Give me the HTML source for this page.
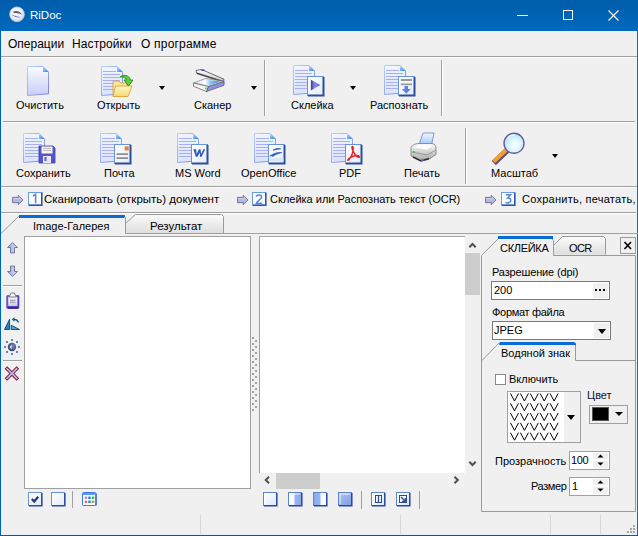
<!DOCTYPE html>
<html><head><meta charset="utf-8">
<style>
*{margin:0;padding:0;box-sizing:border-box}
html,body{width:638px;height:536px;overflow:hidden;background:#f0f0f0}
body{position:relative;font-family:"Liberation Sans",sans-serif;font-size:11px;color:#000}
.a{position:absolute}
.t{position:absolute;white-space:nowrap;line-height:13px}
.hl{position:absolute;height:1px;background:#a0a0a0}
.hw{position:absolute;height:1px;background:#fff}
.vl{position:absolute;width:1px;background:#a0a0a0}
.vw{position:absolute;width:1px;background:#fff}
.tri{position:absolute;width:0;height:0;border-left:3.5px solid transparent;border-right:3.5px solid transparent;border-top:4px solid #000}
svg{position:absolute;overflow:visible}
</style></head><body>
<svg width="0" height="0" style="position:absolute">
<defs>
<linearGradient id="gDoc" x1="0" y1="0" x2="0" y2="1"><stop offset="0" stop-color="#fbfcff"/><stop offset="1" stop-color="#c9cdf6"/></linearGradient>
<linearGradient id="gDocL" x1="0" y1="0" x2="0" y2="1"><stop offset="0" stop-color="#eef6ff"/><stop offset="1" stop-color="#d7e4fb"/></linearGradient>
<linearGradient id="gFold" x1="0" y1="0" x2="1" y2="1"><stop offset="0" stop-color="#b8dcff"/><stop offset="1" stop-color="#2a7fe0"/></linearGradient>
<linearGradient id="gDocB" x1="0" y1="0" x2="1" y2="1"><stop offset="0" stop-color="#b4d4fb"/><stop offset="1" stop-color="#7f7fd8"/></linearGradient>
<linearGradient id="gBadge" x1="0" y1="0" x2="1" y2="1"><stop offset="0" stop-color="#ffffff"/><stop offset="1" stop-color="#e4eaf6"/></linearGradient>
<symbol id="doc" viewBox="0 0 22 30">
<path d="M0.5 0.5H16L21.5 6V27.8L0.5 29.5Z" fill="url(#gDoc)" stroke="url(#gDocB)"/>
<path d="M16 0.5V6H21.5Z" fill="url(#gFold)"/>
</symbol>
<symbol id="docl" viewBox="0 0 22 30">
<path d="M0.5 0.5H16L21.5 6V27.8L0.5 29.5Z" fill="url(#gDocL)" stroke="url(#gDocB)"/>
<path d="M16 0.5V6H21.5Z" fill="url(#gFold)"/>
<g stroke="#b0acf4" stroke-width="1">
<path d="M2 5.5H15M2 8.5H19M2 11.5H19M2 14.5H19M2 17.5H19M2 20.5H19M2 23.5H19"/>
</g>
</symbol>
</defs>
</svg>

<!-- ===== TITLE BAR ===== -->
<div class="a" style="left:0;top:0;width:638px;height:31px;background:linear-gradient(#005dab,#0069be)"></div>
<svg style="left:9px;top:6px" width="17" height="17" viewBox="0 0 17 17">
<defs><radialGradient id="gTi" cx="0.45" cy="0.4" r="0.6"><stop offset="0" stop-color="#ffffff"/><stop offset="0.7" stop-color="#e4ecf8"/><stop offset="1" stop-color="#c8d0e0"/></radialGradient>
<linearGradient id="gSw" x1="0" y1="0" x2="1" y2="0"><stop offset="0" stop-color="#6a6a78"/><stop offset="0.6" stop-color="#5a8ae0"/><stop offset="1" stop-color="#4a5a88"/></linearGradient></defs>
<circle cx="8" cy="8.3" r="7.4" fill="url(#gTi)" stroke="#d8ccc0" stroke-width="0.7"/>
<path d="M4.2 5.6C7.5 4.2 11.5 5.5 13.2 8.8C11 7.4 8 6.6 4.6 7Z" fill="#5a5f70"/>
<path d="M2.8 8.6C4.5 11 8.5 12.2 12 11C9 10.8 6 10.2 2.8 8.6Z" fill="url(#gSw)"/>
</svg>
<div class="t" style="left:30px;top:9px;font-size:11.5px;color:#fff">RiDoc</div>
<div class="a" style="left:517px;top:15px;width:11px;height:1px;background:#fff"></div>
<div class="a" style="left:563px;top:10px;width:10px;height:10px;border:1px solid #fff"></div>
<svg style="left:608px;top:10px" width="11" height="11" viewBox="0 0 11 11"><path d="M0.5 0.5L10.5 10.5M10.5 0.5L0.5 10.5" stroke="#fff" stroke-width="1.1"/></svg>

<!-- window border -->
<div class="a" style="left:0;top:31px;width:1px;height:505px;background:#0063b1"></div>
<div class="a" style="left:637px;top:31px;width:1px;height:505px;background:#0070cc"></div>
<div class="a" style="left:0;top:535px;width:638px;height:1px;background:#005aa8"></div>

<!-- ===== MENU ===== -->
<div class="t" style="left:8px;top:37px;font-size:12px;line-height:14px">Операции</div>
<div class="t" style="left:72px;top:37px;font-size:12px;line-height:14px;letter-spacing:0.1px">Настройки</div>
<div class="t" style="left:141px;top:37px;font-size:12px;line-height:14px;letter-spacing:0.2px">О программе</div>
<div class="hl" style="left:1px;top:56px;width:636px"></div>
<div class="hw" style="left:1px;top:57px;width:636px"></div>

<!-- ===== TOOLBAR 1 ===== -->
<svg style="left:27px;top:66px" width="22" height="30"><use href="#doc"/></svg>
<div class="t" style="left:16px;top:99px">Очистить</div>

<svg style="left:101px;top:66px" width="22" height="30"><use href="#docl"/></svg>
<svg style="left:112px;top:74px" width="22" height="24" viewBox="0 0 22 24">
<defs><linearGradient id="gFol" x1="0" y1="0" x2="0" y2="1"><stop offset="0" stop-color="#fff8c4"/><stop offset="1" stop-color="#f6d878"/></linearGradient></defs>
<path d="M1 7H7L9 9H15V22H1Z" fill="#fbe49a" stroke="#d4a030" stroke-width="0.8"/>
<path d="M3.5 12H20L16 22.5H1Z" fill="url(#gFol)" stroke="#d4a030" stroke-width="0.8"/>
<path d="M8 3C12 0 17 1 18.5 6L21 6L16.5 12L12 6L14.5 6C13.5 3.5 10.5 2.5 8 3Z" fill="#5ad040" stroke="#1e7a14" stroke-width="0.8"/>
</svg>
<div class="t" style="left:97px;top:99px">Открыть</div>
<div class="tri" style="left:159px;top:86px"></div>

<svg style="left:188px;top:64px" width="40" height="32" viewBox="0 0 40 32">
<defs><linearGradient id="gGlass" x1="0" y1="0" x2="1" y2="0"><stop offset="0" stop-color="#d8eeff"/><stop offset="0.35" stop-color="#ffffff"/><stop offset="0.55" stop-color="#8cc8f8"/><stop offset="1" stop-color="#1a86e6"/></linearGradient>
<linearGradient id="gLid" x1="0" y1="0" x2="0" y2="1"><stop offset="0" stop-color="#ffffff"/><stop offset="1" stop-color="#c8c8c8"/></linearGradient></defs>
<path d="M8 6.5L13.5 5.5L36 15.2L35 17.2L8.5 8.8Z" fill="url(#gLid)" stroke="#4a4a4a" stroke-width="0.8"/>
<ellipse cx="15" cy="6.2" rx="2" ry="0.8" fill="#3a3ac0"/>
<path d="M8.8 9.3L34.8 17.8" stroke="#3a3a3a" stroke-width="1.4" opacity="0.85"/>
<path d="M34.5 15L36.5 15.8L36.3 20.5L34.5 18Z" fill="#7a7ae0"/>
<path d="M5.5 19L17.5 14.5L36 17.5L20.5 22.5Z" fill="#e8e8e8" stroke="#777" stroke-width="0.6"/>
<path d="M9.5 18.7L17.5 15.8L32.5 17.6L20.5 21.4Z" fill="url(#gGlass)"/>
<path d="M5.5 19V22.3L18.5 27.6L20.5 22.5Z" fill="#f4f4f4" stroke="#555" stroke-width="0.7"/>
<path d="M20.5 22.5L36 17.5V21.3L18.5 27.6Z" fill="#9090e8" stroke="#555" stroke-width="0.7"/>
<rect x="17" y="23.6" width="1.6" height="1.6" fill="#40d040"/>
</svg>
<div class="t" style="left:194px;top:99px">Сканер</div>
<div class="tri" style="left:251px;top:86px"></div>
<div class="vl" style="left:264px;top:60px;height:56px"></div>
<div class="vw" style="left:265px;top:60px;height:56px"></div>

<svg style="left:293px;top:65px" width="22" height="30"><use href="#docl"/></svg>
<svg style="left:307px;top:76px" width="18" height="21" viewBox="0 0 18 21"><rect x="0.5" y="0.5" width="16" height="19" fill="url(#gBadge)" stroke="#6a94d8"/><path d="M16.5 1V19.5H1" stroke="#2a4ea0" stroke-width="2" fill="none"/><defs><linearGradient id="gPlay" x1="0" y1="0" x2="1" y2="0"><stop offset="0" stop-color="#3a3aa0"/><stop offset="0.4" stop-color="#8a8ae0"/><stop offset="1" stop-color="#6a6ad0"/></linearGradient></defs><path d="M3.9 3.8L13.4 9L3.9 14.4Z" fill="url(#gPlay)"/></svg>
<div class="t" style="left:291px;top:99px">Склейка</div>
<div class="tri" style="left:350px;top:86px"></div>

<svg style="left:384px;top:65px" width="22" height="30"><use href="#docl"/></svg>
<svg style="left:398px;top:76px" width="18" height="21" viewBox="0 0 18 21"><rect x="0.5" y="0.5" width="16" height="19" fill="url(#gBadge)" stroke="#6a94d8"/><path d="M16.5 1V19.5H1" stroke="#2a4ea0" stroke-width="2" fill="none"/><path d="M2.8 4H14M2.8 8.3H14" stroke="#9a9a9a" stroke-width="1.8"/><path d="M6.5 10H10V13H12.8L8.3 17.8L3.8 13H6.5Z" fill="#5a86e0"/></svg>
<div class="t" style="left:370px;top:99px">Распознать</div>
<div class="vl" style="left:441px;top:60px;height:56px"></div>
<div class="vw" style="left:442px;top:60px;height:56px"></div>

<div class="hl" style="left:3px;top:121px;width:632px"></div>
<div class="hw" style="left:3px;top:122px;width:632px"></div>

<!-- ===== TOOLBAR 2 ===== -->
<svg style="left:23px;top:133px" width="22" height="30"><use href="#docl"/></svg>
<svg style="left:38px;top:145px" width="18" height="19" viewBox="0 0 18 19">
<path d="M1 1H15L17 3V18H1Z" fill="#5656c8" stroke="#3a3aa0" stroke-width="0.8"/>
<rect x="3.5" y="1.5" width="11" height="7" fill="#f4f4f4"/>
<path d="M5 3.5H13M5 5.5H13" stroke="#aaa" stroke-width="0.8"/>
<rect x="5" y="11" width="8" height="7" fill="#e8e8f4"/>
<rect x="6.5" y="12" width="2" height="4" fill="#5656c8"/>
</svg>
<div class="t" style="left:16px;top:167px">Сохранить</div>

<svg style="left:100px;top:133px" width="22" height="30"><use href="#docl"/></svg>
<svg style="left:114px;top:144px" width="18" height="21" viewBox="0 0 18 21"><rect x="0.5" y="0.5" width="16" height="19" fill="url(#gBadge)" stroke="#6a94d8"/><path d="M16.5 1V19.5H1" stroke="#2a4ea0" stroke-width="2" fill="none"/><rect x="10.7" y="2.3" width="4" height="4.2" fill="#e8843a"/><path d="M2.5 10.1H14M2.5 14.2H14" stroke="#8f8f8f" stroke-width="1.8"/></svg>
<div class="t" style="left:104px;top:167px">Почта</div>

<svg style="left:177px;top:133px" width="22" height="30"><use href="#docl"/></svg>
<svg style="left:191px;top:144px" width="18" height="21" viewBox="0 0 18 21"><rect x="0.5" y="0.5" width="16" height="19" fill="url(#gBadge)" stroke="#6a94d8"/><path d="M16.5 1V19.5H1" stroke="#2a4ea0" stroke-width="2" fill="none"/><path d="M2.4 5.2H5.2L5.5 10.2L8 5.2H9.6L10 10.2L12.4 5.2H14.2L10.6 12.8H9L8.7 8.6L6.4 12.8H4.8Z" fill="#2a56b8"/></svg>
<div class="t" style="left:175px;top:167px">MS Word</div>

<svg style="left:254px;top:133px" width="22" height="30"><use href="#docl"/></svg>
<svg style="left:268px;top:144px" width="18" height="21" viewBox="0 0 18 21"><rect x="0.5" y="0.5" width="16" height="19" fill="url(#gBadge)" stroke="#6a94d8"/><path d="M16.5 1V19.5H1" stroke="#2a4ea0" stroke-width="2" fill="none"/><path d="M5 6.2C7 4.6 10 4.2 12.6 4.8C10.5 5.2 8 5.4 5 6.2Z M1.8 12.2C5 9.4 10 8 13.7 8.6C10.5 9.4 7 10.6 5 12.4C4 11.8 2.8 11.8 1.8 12.2Z" fill="#2a56b8" stroke="#2a56b8" stroke-width="0.7"/><rect x="1.5" y="13.9" width="14" height="3.2" fill="#dde4f4"/></svg>
<div class="t" style="left:241px;top:167px">OpenOffice</div>

<svg style="left:331px;top:133px" width="22" height="30"><use href="#docl"/></svg>
<svg style="left:345px;top:144px" width="18" height="21" viewBox="0 0 18 21"><rect x="0.5" y="0.5" width="16" height="19" fill="url(#gBadge)" stroke="#6a94d8"/><path d="M16.5 1V19.5H1" stroke="#2a4ea0" stroke-width="2" fill="none"/><path d="M7.3 2.5C6 3.6 8.5 8.5 10.5 11C12 12.8 14.8 14.5 14.4 12.6C14 10.8 9 11.3 5 13.6C2 15.3 2.4 17.6 4 15.6C6.2 12.8 8 8.5 8.2 5C8.3 3.4 7.9 2.2 7.3 2.5Z" fill="none" stroke="#e82020" stroke-width="1.4"/></svg>
<div class="t" style="left:339px;top:167px">PDF</div>

<svg style="left:403px;top:126px" width="42" height="40" viewBox="0 0 42 40">
<defs><linearGradient id="gPap" x1="0" y1="0" x2="0" y2="1"><stop offset="0" stop-color="#f4f8ff"/><stop offset="1" stop-color="#a0c8f8"/></linearGradient>
<linearGradient id="gPr" x1="0" y1="0" x2="0" y2="1"><stop offset="0" stop-color="#fafafa"/><stop offset="1" stop-color="#a8a8a8"/></linearGradient></defs>
<path d="M20 7H31L28.7 18.5H16Z" fill="url(#gPap)" stroke="#7a7ad8" stroke-width="0.8"/>
<path d="M8 22.5C8 19.5 12 17.5 16 17.5L29 17.5C32 18 33 20 33 22.5V28.5L25.5 33.5L18 35L8 30Z" fill="url(#gPr)" stroke="#7a7a7a" stroke-width="0.8"/>
<path d="M10.5 21.5L16 19L30 19.5L24 23.5Z" fill="#fdfdfd"/>
<path d="M9 26L24 29L33 24" stroke="#8a8a8a" stroke-width="0.8" fill="none"/>
<path d="M10 31L18 35L26 32.5" stroke="#303030" stroke-width="1.4" fill="none"/>
<path d="M18 34.5L21 33.5" stroke="#5a6ad0" stroke-width="1.4"/>
<rect x="10" y="25" width="1.8" height="1.8" fill="#40c040"/>
</svg>
<div class="t" style="left:404px;top:167px">Печать</div>
<div class="vl" style="left:465px;top:128px;height:56px"></div>
<div class="vw" style="left:466px;top:128px;height:56px"></div>

<svg style="left:488px;top:128px" width="42" height="40" viewBox="0 0 42 40">
<defs><radialGradient id="gLens" cx="0.55" cy="0.6" r="0.65"><stop offset="0" stop-color="#ffffff"/><stop offset="0.5" stop-color="#d8f6ff"/><stop offset="1" stop-color="#a8dcf8"/></radialGradient></defs>
<path d="M8 33L17.5 24" stroke="#6a5070" stroke-width="6" stroke-linecap="square"/>
<path d="M7.2 32.2L16.7 23.2" stroke="#f4a030" stroke-width="4" stroke-linecap="square"/>
<circle cx="26" cy="15.3" r="10" fill="url(#gLens)" stroke="#6a5a9a" stroke-width="1.4"/>
<path d="M19.5 11C21 8 24 6.8 27 7" stroke="#fff" stroke-width="1.2" fill="none" opacity="0.8"/>
</svg>
<div class="t" style="left:491px;top:167px">Масштаб</div>
<div class="tri" style="left:552px;top:154px"></div>

<div class="hl" style="left:1px;top:186px;width:636px"></div>
<div class="hw" style="left:1px;top:187px;width:636px"></div>

<!-- ===== STEP BAR ===== -->
<svg width="0" height="0" style="position:absolute"><defs><linearGradient id="gStA" x1="0" y1="0" x2="0" y2="1"><stop offset="0" stop-color="#d4d6f0"/><stop offset="1" stop-color="#9ea4d8"/></linearGradient></defs></svg>
<svg style="left:12px;top:195px" width="12" height="10" viewBox="0 0 12 10"><path d="M0.5 2.3H6.3V0.4L11 5L6.3 9.6V7.7H0.5Z" fill="url(#gStA)" stroke="#5f6488" stroke-width="0.8"/></svg>
<svg style="left:28px;top:192px" width="15" height="14" viewBox="0 0 15 14"><rect x="0.5" y="0.5" width="13" height="12.5" fill="#fff" stroke="#6a9ae0"/><path d="M13.8 0.5V13.3H0.8" stroke="#2a58b0" stroke-width="1.6" fill="none"/><path d="M4.8 4.2L7.6 2.3V11.2" stroke="#5a8ae0" stroke-width="1.6" fill="none"/></svg>
<div class="t" style="left:44px;top:193px;font-size:11.5px">Сканировать (открыть) документ</div>
<svg style="left:237px;top:195px" width="12" height="10" viewBox="0 0 12 10"><path d="M0.5 2.3H6.3V0.4L11 5L6.3 9.6V7.7H0.5Z" fill="url(#gStA)" stroke="#5f6488" stroke-width="0.8"/></svg>
<svg style="left:252px;top:192px" width="15" height="14" viewBox="0 0 15 14"><rect x="0.5" y="0.5" width="13" height="12.5" fill="#fff" stroke="#6a9ae0"/><path d="M13.8 0.5V13.3H0.8" stroke="#2a58b0" stroke-width="1.6" fill="none"/><path d="M4.4 4.6C4.6 2.6 9.6 2.2 9.6 5C9.6 7.2 5.2 8.6 4.4 11.2H10.2" stroke="#5a8ae0" stroke-width="1.6" fill="none"/></svg>
<div class="t" style="left:270px;top:193px">Склейка или Распознать текст (OCR)</div>
<svg style="left:485px;top:195px" width="12" height="10" viewBox="0 0 12 10"><path d="M0.5 2.3H6.3V0.4L11 5L6.3 9.6V7.7H0.5Z" fill="url(#gStA)" stroke="#5f6488" stroke-width="0.8"/></svg>
<svg style="left:501px;top:192px" width="15" height="14" viewBox="0 0 15 14"><rect x="0.5" y="0.5" width="13" height="12.5" fill="#fff" stroke="#6a9ae0"/><path d="M13.8 0.5V13.3H0.8" stroke="#2a58b0" stroke-width="1.6" fill="none"/><path d="M4.6 2.8H9.4L6.6 6C9 5.8 10 7.4 9.8 8.8C9.6 11 5.8 11.6 4.4 10.2" stroke="#5a8ae0" stroke-width="1.6" fill="none"/></svg>
<div class="a" style="left:522px;top:188px;width:113px;height:24px;overflow:hidden">
<div class="t" style="left:0;top:5px;letter-spacing:0.25px">Сохранить, печатать, экспорт</div></div>

<div class="hl" style="left:1px;top:212px;width:635px"></div>
<div class="hw" style="left:1px;top:213px;width:635px"></div>

<!-- ===== MAIN TABS ===== -->
<svg style="left:0;top:213px" width="638" height="24" viewBox="0 0 638 24">
<defs><linearGradient id="gTab" x1="0" y1="0" x2="0" y2="1"><stop offset="0" stop-color="#fbfbfb"/><stop offset="1" stop-color="#dedede"/></linearGradient></defs>
<!-- inactive tab -->
<path d="M125.5 20.5V10.5L135.5 1.5H221.5L223.5 3.5V20.5Z" fill="url(#gTab)" stroke="#9a9a9a"/>
<!-- baseline -->
<path d="M125 20.5H638" stroke="#a0a0a0"/>
<!-- active tab -->
<path d="M1 20.5L19.5 2.5H123.5L125.5 4.5V20.5" fill="#f0f0f0" stroke="#9a9a9a"/>
<path d="M19 3.5H123.5L125 5V2H19Z" fill="#1a6fd0"/>
<rect x="19" y="2" width="105" height="3" fill="#0a6ad8"/>
</svg>
<div class="t" style="left:33px;top:220px">Image-Галерея</div>
<div class="t" style="left:150px;top:220px;font-size:11.5px">Результат</div>

<!-- ===== LEFT TOOLBAR ===== -->
<svg style="left:7px;top:242px" width="11" height="12" viewBox="0 0 11 12">
<defs><linearGradient id="gArr" x1="0" y1="0" x2="1" y2="0"><stop offset="0" stop-color="#a0a8d8"/><stop offset="1" stop-color="#dcdff2"/></linearGradient></defs>
<path d="M5.5 0.5L10.5 5.5H7.5V11H3.5V5.5H0.5Z" fill="url(#gArr)" stroke="#6a7098" stroke-width="0.9"/>
</svg>
<svg style="left:7px;top:265px" width="11" height="12" viewBox="0 0 11 12">
<path d="M5.5 11.5L10.5 6.5H7.5V1H3.5V6.5H0.5Z" fill="url(#gArr)" stroke="#6a7098" stroke-width="0.9"/>
</svg>
<div class="hl" style="left:3px;top:285px;width:19px"></div>
<div class="hw" style="left:3px;top:286px;width:19px"></div>
<svg style="left:6px;top:292px" width="14" height="18" viewBox="0 0 14 18">
<defs><linearGradient id="gCb" x1="0" y1="0" x2="1" y2="0"><stop offset="0" stop-color="#5a4ac0"/><stop offset="0.5" stop-color="#9a8ae8"/><stop offset="1" stop-color="#4a3ab0"/></linearGradient>
<linearGradient id="gCp" x1="0" y1="0" x2="0" y2="1"><stop offset="0" stop-color="#f6f6fc"/><stop offset="1" stop-color="#cfcaf0"/></linearGradient></defs>
<rect x="0.3" y="3" width="13" height="13.8" rx="1.5" fill="url(#gCb)"/>
<rect x="2.2" y="5" width="9.2" height="9.3" fill="url(#gCp)"/>
<path d="M4 8.3H9.5M4 10.3H9.5" stroke="#8a8a9a" stroke-width="0.9"/>
<rect x="1.8" y="14.3" width="10" height="2.6" fill="#3a2a90"/>
<path d="M3 5L5.2 1H8.3L10.5 5Z" fill="#fafafa" stroke="#7a7a7a" stroke-width="1"/>
</svg>
<svg style="left:4px;top:317px" width="17" height="14" viewBox="0 0 17 14">
<defs><linearGradient id="gFl" x1="0" y1="0" x2="0" y2="1"><stop offset="0" stop-color="#3a8ac0"/><stop offset="1" stop-color="#2a78b0"/></linearGradient></defs>
<path d="M0.5 12.5L5.6 2.2V12.5Z" fill="url(#gFl)" stroke="#0a5a90" stroke-width="1"/>
<path d="M7.2 8.2V12.5H15.5Z" fill="#5aa0d0" stroke="#0a5a90" stroke-width="1"/>
<path d="M9.5 2.5C11.5 2.2 13.5 3 14.5 5.5" stroke="#0a5a90" stroke-width="1.3" fill="none"/>
<path d="M7.8 2.5L10.5 0.2V4.8Z" fill="#0a5a90"/>
</svg>
<svg style="left:4px;top:339px" width="16" height="16" viewBox="0 0 16 16">
<g fill="#5a82d8"><rect x="7" y="0" width="2" height="2"/><rect x="7" y="14" width="2" height="2"/><rect x="0" y="7" width="2" height="2"/><rect x="14" y="7" width="2" height="2"/>
<rect x="2" y="2" width="2" height="2"/><rect x="12" y="2" width="2" height="2"/><rect x="2" y="12" width="2" height="2"/><rect x="12" y="12" width="2" height="2"/></g>
<defs><radialGradient id="gBr" cx="0.6" cy="0.4" r="0.7"><stop offset="0" stop-color="#7a8ab0"/><stop offset="1" stop-color="#2a3a68"/></radialGradient></defs><circle cx="8" cy="8" r="4.2" fill="url(#gBr)"/>
<path d="M7.6 5.8L5.6 8L7.6 10.2Z" fill="#e8eef8"/>
</svg>
<div class="hl" style="left:3px;top:360px;width:19px"></div>
<div class="hw" style="left:3px;top:361px;width:19px"></div>
<svg style="left:5px;top:367px" width="14" height="13" viewBox="0 0 14 13">
<path d="M2.2 1.8L11.6 11.2M11.6 1.8L2.2 11.2" stroke="#8a1020" stroke-width="3.6" stroke-linecap="square"/>
<path d="M2.2 1.8L11.6 11.2M11.6 1.8L2.2 11.2" stroke="#b0b8f0" stroke-width="1.8" stroke-linecap="square"/>
</svg>

<!-- ===== GALLERY ===== -->
<div class="a" style="left:24px;top:236px;width:227px;height:253px;background:#fff;border:1px solid #a0a0a0"></div>
<svg style="left:28px;top:492px" width="15" height="15" viewBox="0 0 15 15">
<rect x="0.5" y="0.5" width="13" height="13" fill="url(#gBadge)" stroke="#6a94d8"/>
<path d="M13.8 1V13.8H1" stroke="#2a4ea0" stroke-width="1.6" fill="none"/>
<path d="M3.8 7L6.2 9.5L10.2 4.8" stroke="#1e3a78" stroke-width="2.2" fill="none"/>
</svg>
<svg style="left:51px;top:492px" width="15" height="15" viewBox="0 0 15 15">
<rect x="0.5" y="0.5" width="13" height="13" fill="url(#gBadge)" stroke="#6a94d8"/>
<path d="M13.8 1V13.8H1" stroke="#2a4ea0" stroke-width="1.6" fill="none"/>
</svg>
<div class="vl" style="left:72px;top:491px;height:17px"></div>
<svg style="left:82px;top:492px" width="15" height="15" viewBox="0 0 15 15">
<rect x="0.5" y="0.5" width="13.5" height="13" rx="1.2" fill="#f8faff" stroke="#3a7ae0"/>
<path d="M14 1.5V13.5" stroke="#2a5ac0" stroke-width="1.2"/>
<rect x="1" y="1" width="12.5" height="2" fill="#5a9af0"/>
<g><rect x="2.8" y="4.6" width="2.4" height="2.4" fill="#a890d8"/><rect x="6.3" y="4.6" width="2.4" height="2.4" fill="#2a72e8"/><rect x="9.8" y="4.6" width="2.4" height="2.4" fill="#30c030"/>
<rect x="2.8" y="8.6" width="2.4" height="2.4" fill="#f07040"/><rect x="6.3" y="8.6" width="2.4" height="2.4" fill="#2a72e8"/><rect x="9.8" y="8.6" width="2.4" height="2.4" fill="#8ab040"/></g>
</svg>

<!-- splitter -->
<svg style="left:252px;top:337px" width="6" height="76" viewBox="0 0 6 76">
<g fill="#a0a0a0">
<rect x="0" y="0" width="2" height="2"/><rect x="3" y="3" width="2" height="2"/>
<rect x="0" y="6" width="2" height="2"/><rect x="3" y="9" width="2" height="2"/>
<rect x="0" y="12" width="2" height="2"/><rect x="3" y="15" width="2" height="2"/>
<rect x="0" y="18" width="2" height="2"/><rect x="3" y="21" width="2" height="2"/>
<rect x="0" y="24" width="2" height="2"/><rect x="3" y="27" width="2" height="2"/>
<rect x="0" y="30" width="2" height="2"/><rect x="3" y="33" width="2" height="2"/>
<rect x="0" y="36" width="2" height="2"/><rect x="3" y="39" width="2" height="2"/>
<rect x="0" y="42" width="2" height="2"/><rect x="3" y="45" width="2" height="2"/>
<rect x="0" y="48" width="2" height="2"/><rect x="3" y="51" width="2" height="2"/>
<rect x="0" y="54" width="2" height="2"/><rect x="3" y="57" width="2" height="2"/>
<rect x="0" y="60" width="2" height="2"/><rect x="3" y="63" width="2" height="2"/>
<rect x="0" y="66" width="2" height="2"/><rect x="3" y="69" width="2" height="2"/>
<rect x="0" y="72" width="2" height="2"/>
</g></svg>

<!-- ===== VIEWER ===== -->
<div class="a" style="left:259px;top:236px;width:1px;height:237px;background:#a0a0a0"></div><div class="a" style="left:260px;top:236px;width:205px;height:1px;background:#a8a8a8"></div>
<div class="a" style="left:260px;top:237px;width:205px;height:236px;background:#fff"></div>
<!-- vscroll -->
<svg style="left:465px;top:237px" width="16" height="236" viewBox="0 0 16 236">
<path d="M4.3 10.3L7.5 7L10.7 10.3" stroke="#505050" stroke-width="2" fill="none"/>
<rect x="0" y="16" width="15" height="42" fill="#cdcdcd"/>
<path d="M4.3 224.7L7.5 228L10.7 224.7" stroke="#505050" stroke-width="2" fill="none"/>
</svg>
<!-- hscroll -->
<svg style="left:260px;top:473px" width="205" height="16" viewBox="0 0 205 16">
<path d="M9 3.8L5.7 7L9 10.2" stroke="#505050" stroke-width="2" fill="none"/>
<rect x="16" y="0" width="44" height="16" fill="#cdcdcd"/>
<path d="M194.5 3.8L197.8 7L194.5 10.2" stroke="#505050" stroke-width="2" fill="none"/>
</svg>
<!-- viewer bottom icons -->
<svg style="left:263px;top:492px" width="200" height="16" viewBox="0 0 200 16">
<defs><linearGradient id="gIc" x1="0" y1="0" x2="1" y2="1"><stop offset="0" stop-color="#ffffff"/><stop offset="1" stop-color="#dfe8f8"/></linearGradient>
<linearGradient id="gHalf" x1="0" y1="0" x2="1" y2="0"><stop offset="0" stop-color="#f8faff"/><stop offset="0.42" stop-color="#f8faff"/><stop offset="0.5" stop-color="#9ab4ee"/><stop offset="1" stop-color="#8aa8ea"/></linearGradient>
<linearGradient id="gHalf2" x1="0" y1="0" x2="1" y2="0"><stop offset="0" stop-color="#8aa8ea"/><stop offset="0.5" stop-color="#9ab4ee"/><stop offset="0.58" stop-color="#f8faff"/><stop offset="1" stop-color="#f8faff"/></linearGradient>
<linearGradient id="gFull" x1="0" y1="0" x2="1" y2="1"><stop offset="0" stop-color="#b0c4f2"/><stop offset="1" stop-color="#7f9ee6"/></linearGradient></defs>
<g stroke="#5a86d0">
<rect x="0.5" y="0.5" width="13" height="13" fill="url(#gIc)"/>
<rect x="25.5" y="0.5" width="13" height="13" fill="url(#gHalf)"/>
<rect x="50.5" y="0.5" width="13" height="13" fill="url(#gHalf2)"/>
<rect x="75.5" y="0.5" width="13" height="13" fill="url(#gFull)"/>
<rect x="108.5" y="0.5" width="13" height="13" fill="url(#gIc)"/>
<rect x="133.5" y="0.5" width="13" height="13" fill="url(#gIc)"/>
</g>
<g stroke="#fff" fill="none" opacity="0.9"><path d="M2 12V2H12M27 12V2H37M77 12V2H87"/></g>
<g stroke="#2a4a9a" stroke-width="1.5" fill="none">
<path d="M13.8 1V13.8H1M38.8 1V13.8H26M63.8 1V13.8H51M88.8 1V13.8H76M121.8 1V13.8H109M146.8 1V13.8H134"/>
</g>
<rect x="112.5" y="3.5" width="6" height="7" fill="none" stroke="#2a4a9a"/>
<path d="M115.5 4V10" stroke="#2a4a9a" stroke-width="1.2"/>
<rect x="136.5" y="3.5" width="7" height="7" fill="none" stroke="#2a4a9a"/>
<path d="M138 5L142 9M142.3 6V9.3H139" stroke="#2a4a9a" fill="none" stroke-width="1.2"/>
</svg>
<div class="vl" style="left:361px;top:491px;height:18px"></div>
<div class="vl" style="left:419px;top:491px;height:18px"></div>

<!-- ===== RIGHT PANEL ===== -->
<svg style="left:480px;top:234px" width="158" height="280" viewBox="480 234 158 280">
<defs><linearGradient id="gTab2" x1="0" y1="0" x2="0" y2="1"><stop offset="0" stop-color="#fbfbfb"/><stop offset="1" stop-color="#dedede"/></linearGradient></defs>
<!-- OCR inactive -->
<path d="M553.5 254.5V245.5L562.5 236.5H603.5L605.5 238.5V254.5" fill="url(#gTab2)" stroke="#9a9a9a"/>
<!-- panel border -->
<path d="M481.5 511.5V255.5L498.5 238.5H551.5L553.5 240.5V255.5H635.5V511.5Z" fill="#f0f0f0" stroke="#9a9a9a"/>
<rect x="498" y="236" width="55" height="3" fill="#0a6ad8"/>
<!-- X button -->
<rect x="620.5" y="237.5" width="15" height="16" fill="#f0f0f0" stroke="#9a9a9a"/>
<path d="M624.5 242L631 249M631 242L624.5 249" stroke="#000" stroke-width="1.6"/>
<!-- watermark group -->
<path d="M482 360.5L499 343H575.5V360.5H635" fill="none" stroke="#9a9a9a"/>
<path d="M500 342H574L576 344V345H499Z" fill="#0a6ad8"/>
</svg>
<div class="t" style="left:500px;top:242px;letter-spacing:-0.3px">СКЛЕЙКА</div>
<div class="t" style="left:569px;top:242px;letter-spacing:-0.6px">OCR</div>

<div class="t" style="left:492px;top:266px;letter-spacing:-0.15px">Разрешение (dpi)</div>
<div class="a" style="left:491px;top:281px;width:119px;height:19px;background:#fff;border:1px solid #7a7a7a"></div>
<div class="a" style="left:593px;top:283px;width:15px;height:15px;background:#f0f0f0"></div>
<div class="a" style="left:595px;top:289px;width:2px;height:2px;background:#000;box-shadow:4px 0 0 #000,8px 0 0 #000"></div>
<div class="t" style="left:494px;top:284px">200</div>

<div class="t" style="left:492px;top:306px;letter-spacing:-0.3px">Формат файла</div>
<div class="a" style="left:492px;top:321px;width:119px;height:19px;background:#fff;border:1px solid #7a7a7a"></div>
<div class="a" style="left:594px;top:323px;width:15px;height:15px;background:#f0f0f0"></div>
<div class="tri" style="left:598px;top:329px;border-left-width:4px;border-right-width:4px;border-top-width:5px"></div>
<div class="t" style="left:494px;top:324px">JPEG</div>

<div class="t" style="left:501px;top:347px">Водяной знак</div>
<div class="a" style="left:495px;top:374px;width:11px;height:11px;background:#fff;border:1px solid #8a8a8a"></div>
<div class="t" style="left:509px;top:373px">Включить</div>

<div class="a" style="left:507px;top:391px;width:74px;height:52px;background:#fff;border:1px solid #a0a0a0"></div>
<div class="a" style="left:564px;top:392px;width:16px;height:50px;background:#f0f0f0"></div>
<div class="tri" style="left:567px;top:415px;border-left-width:4.5px;border-right-width:4.5px;border-top-width:5px"></div>
<svg style="left:0;top:0" width="638" height="536" viewBox="0 0 638 536"><path d="M510.5 393.5L514.5 401.0L518.5 393.5M520.4 393.5L524.4 401.0L528.4 393.5M530.3 393.5L534.3 401.0L538.3 393.5M540.2 393.5L544.2 401.0L548.2 393.5M550.1 393.5L554.1 401.0L558.1 393.5M510.5 403.3L514.5 410.8L518.5 403.3M520.4 403.3L524.4 410.8L528.4 403.3M530.3 403.3L534.3 410.8L538.3 403.3M540.2 403.3L544.2 410.8L548.2 403.3M550.1 403.3L554.1 410.8L558.1 403.3M510.5 413.1L514.5 420.6L518.5 413.1M520.4 413.1L524.4 420.6L528.4 413.1M530.3 413.1L534.3 420.6L538.3 413.1M540.2 413.1L544.2 420.6L548.2 413.1M550.1 413.1L554.1 420.6L558.1 413.1M510.5 422.9L514.5 430.4L518.5 422.9M520.4 422.9L524.4 430.4L528.4 422.9M530.3 422.9L534.3 430.4L538.3 422.9M540.2 422.9L544.2 430.4L548.2 422.9M550.1 422.9L554.1 430.4L558.1 422.9M510.5 432.7L514.5 440.2L518.5 432.7M520.4 432.7L524.4 440.2L528.4 432.7M530.3 432.7L534.3 440.2L538.3 432.7M540.2 432.7L544.2 440.2L548.2 432.7M550.1 432.7L554.1 440.2L558.1 432.7" stroke="#000" stroke-width="1" fill="none"/></svg>

<div class="t" style="left:587px;top:389px;color:#101030">Цвет</div>
<div class="a" style="left:589px;top:405px;width:39px;height:19px;background:#f0f0f0;border:1px solid #a0a0a0"></div>
<div class="a" style="left:592px;top:407px;width:17px;height:14px;background:#000;border:1px solid #555"></div>
<div class="tri" style="left:615px;top:412px;border-left-width:4px;border-right-width:4px;border-top-width:4px"></div>

<div class="t" style="left:495px;top:455px">Прозрачность</div>
<div class="a" style="left:569px;top:451px;width:41px;height:19px;background:#fff;border:1px solid #a0a0a0"></div>
<div class="a" style="left:593px;top:453px;width:15px;height:6px;background:#f0f0f0"></div>
<div class="a" style="left:593px;top:461px;width:15px;height:7px;background:#f0f0f0"></div>
<div class="t" style="left:571px;top:454px;letter-spacing:-0.4px">100</div>
<svg style="left:597px;top:454px" width="8" height="12" viewBox="0 0 8 12"><path d="M0.5 3.5L3.5 0.5L6.5 3.5Z M0.5 8.5L3.5 11.5L6.5 8.5Z" fill="#000"/></svg>
<div class="t" style="left:531px;top:480px;letter-spacing:-0.4px">Размер</div>
<div class="a" style="left:569px;top:477px;width:41px;height:19px;background:#fff;border:1px solid #a0a0a0"></div>
<div class="a" style="left:593px;top:479px;width:15px;height:6px;background:#f0f0f0"></div>
<div class="a" style="left:593px;top:487px;width:15px;height:7px;background:#f0f0f0"></div>
<div class="t" style="left:572px;top:480px">1</div>
<svg style="left:597px;top:480px" width="8" height="12" viewBox="0 0 8 12"><path d="M0.5 3.5L3.5 0.5L6.5 3.5Z M0.5 8.5L3.5 11.5L6.5 8.5Z" fill="#000"/></svg>

<!-- ===== STATUS BAR ===== -->
<div class="a" style="left:200px;top:515px;width:1px;height:19px;background:#d8d8d8"></div>
<div class="a" style="left:400px;top:515px;width:1px;height:19px;background:#d8d8d8"></div>
<div class="a" style="left:550px;top:515px;width:1px;height:19px;background:#d8d8d8"></div>
<div class="a" style="left:600px;top:515px;width:1px;height:19px;background:#d8d8d8"></div>
<svg style="left:627px;top:525px" width="8" height="8" viewBox="0 0 8 8"><g fill="#a8a8a8"><rect x="6" y="0" width="2" height="2"/><rect x="3" y="3" width="2" height="2"/><rect x="6" y="3" width="2" height="2"/><rect x="0" y="6" width="2" height="2"/><rect x="3" y="6" width="2" height="2"/><rect x="6" y="6" width="2" height="2"/></g></svg>
</body></html>
